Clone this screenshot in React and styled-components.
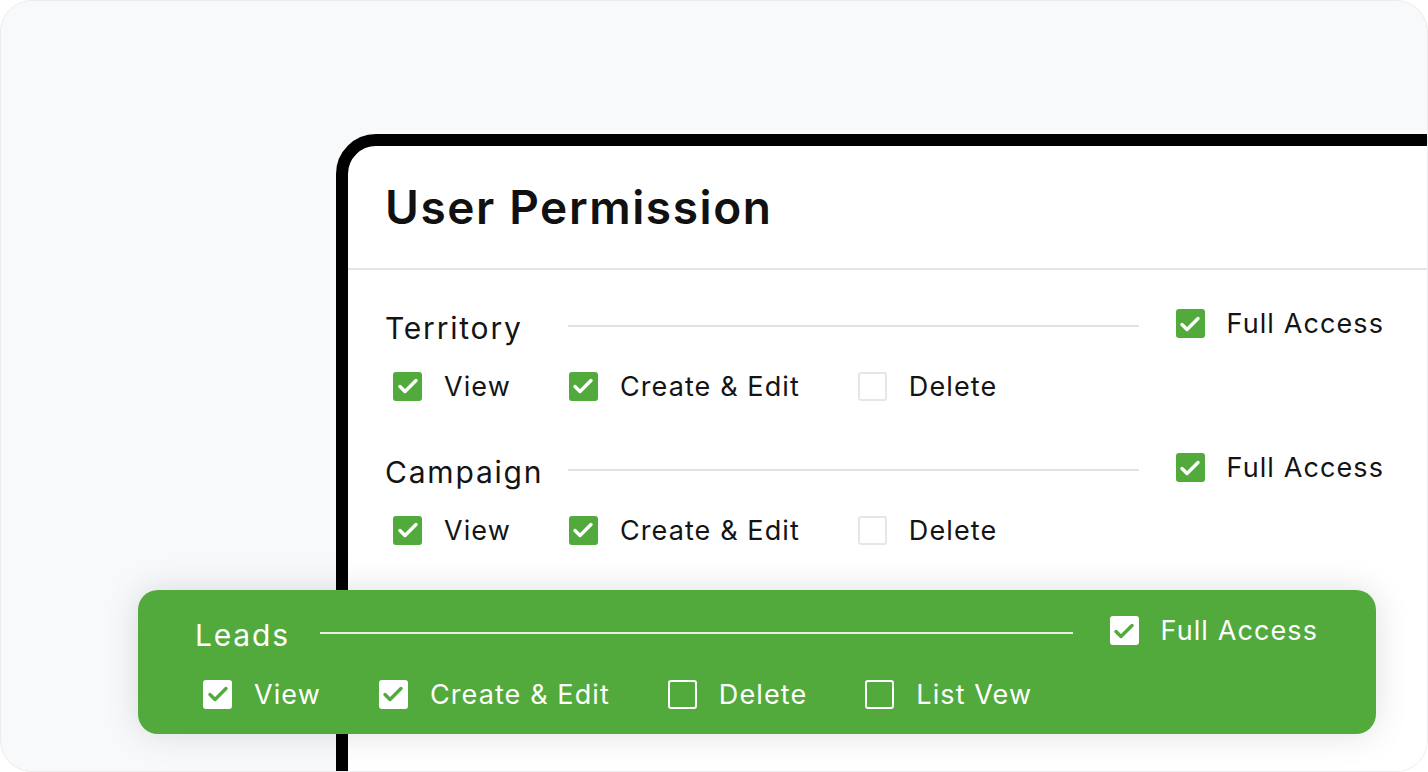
import React from "react";
import styled, { createGlobalStyle } from "styled-components";

const GREEN = "#52aa3d";

const GlobalStyle = createGlobalStyle`
  html, body {
    margin: 0;
    padding: 0;
    background: #ffffff;
  }
  body {
    font-family: Inter, "Noto Sans", sans-serif;
    color: #141414;
  }
  * {
    box-sizing: border-box;
  }
`;

const Canvas = styled.div`
  position: relative;
  width: 1428px;
  height: 772px;
  border: 1px solid #ececee;
  border-radius: 32px;
  background: #f8f9fa;
  overflow: hidden;
  padding: 133px 0 0 335px;
`;

const Frame = styled.div`
  width: 1200px;
  height: 700px;
  border: 12px solid #000;
  border-radius: 40px 40px 0 0;
  background: #fff;
`;

const Header = styled.div`
  height: 124px;
  display: flex;
  align-items: center;
  padding-left: 37px;
  border-bottom: 2px solid #e4e4e4;
`;

const Title = styled.h1`
  margin: 0;
  font-size: 46px;
  font-weight: 600;
  letter-spacing: 1.6px;
  color: #111;
`;

const Body = styled.div`
  padding: 37px 0 0 37px;
  display: flex;
  flex-direction: column;
  gap: 50px;
`;

const Section = styled.div`
  width: ${(p) => p.$width}px;
  display: flex;
  flex-direction: column;
  gap: ${(p) => p.$gap}px;
`;

const LabelRow = styled.div`
  height: 40px;
  display: grid;
  grid-template-columns: ${(p) => p.$labelWidth}px 1fr auto;
  align-items: center;
`;

const Label = styled.span`
  font-size: 30px;
  font-weight: 400;
  letter-spacing: 1.8px;
  color: ${(p) => (p.$inverse ? "#fff" : "#141414")};
`;

const Rule = styled.div`
  height: 2px;
  margin: 0 ${(p) => p.$gap}px 4px 0;
  background: ${(p) => (p.$inverse ? "#e6efe2" : "#e2e2e2")};
`;

const Options = styled.div`
  height: 30px;
  display: flex;
  align-items: center;
  gap: 58px;
  padding-left: 8px;
`;

const Option = styled.label`
  display: flex;
  align-items: center;
  gap: 22px;
  font-size: 27px;
  letter-spacing: 1.1px;
  color: ${(p) => (p.$inverse ? "#fff" : "#141414")};
  margin-bottom: ${(p) => (p.$raised ? "8px" : "0")};
`;

const Box = styled.span`
  width: 29px;
  height: 29px;
  flex: none;
  border-radius: 3px;
  display: flex;
  align-items: center;
  justify-content: center;
  background: ${(p) =>
    p.$checked ? (p.$inverse ? "#fff" : GREEN) : "transparent"};
  border: ${(p) =>
    p.$checked ? "none" : p.$inverse ? "2px solid #fff" : "2px solid #e6e6e6"};
`;

const LeadsCard = styled.div`
  position: absolute;
  left: 137px;
  top: 589px;
  width: 1238px;
  height: 144px;
  border-radius: 20px;
  background: ${GREEN};
  box-shadow: 0 0 34px rgba(0, 0, 0, 0.13);
  padding: 24px 0 0 57px;
`;

function Check({ checked, inverse }) {
  return (
    <Box $checked={checked} $inverse={inverse}>
      {checked && (
        <svg width="22" height="22" viewBox="0 0 22 22" fill="none">
          <path
            d="M3 11.5 L8 16.5 L19 5.5"
            stroke={inverse ? GREEN : "#fff"}
            strokeWidth="3.4"
            strokeLinecap="round"
            strokeLinejoin="round"
          />
        </svg>
      )}
    </Box>
  );
}

function PermissionGroup({
  name,
  options,
  inverse,
  width,
  labelWidth,
  ruleGap,
  rowGap = 24,
}) {
  return (
    <Section $width={width} $gap={rowGap}>
      <LabelRow $labelWidth={labelWidth}>
        <Label $inverse={inverse}>{name}</Label>
        <Rule $inverse={inverse} $gap={ruleGap} />
        <Option $inverse={inverse} $raised>
          <Check checked inverse={inverse} />
          Full Access
        </Option>
      </LabelRow>
      <Options>
        {options.map((o) => (
          <Option key={o.label} $inverse={inverse}>
            <Check checked={o.checked} inverse={inverse} />
            {o.label}
          </Option>
        ))}
      </Options>
    </Section>
  );
}

const baseOptions = [
  { label: "View", checked: true },
  { label: "Create & Edit", checked: true },
  { label: "Delete", checked: false },
];

const leadOptions = [...baseOptions, { label: "List Vew", checked: false }];

export default function App() {
  return (
    <>
      <GlobalStyle />
      <Canvas>
        <Frame>
          <Header>
            <Title>User Permission</Title>
          </Header>
          <Body>
            <PermissionGroup
              name="Territory"
              options={baseOptions}
              width={999}
              labelWidth={183}
              ruleGap={37}
            />
            <PermissionGroup
              name="Campaign"
              options={baseOptions}
              width={999}
              labelWidth={183}
              ruleGap={37}
            />
          </Body>
        </Frame>
        <LeadsCard>
          <PermissionGroup
            name="Leads"
            options={leadOptions}
            inverse
            width={1123}
            labelWidth={125}
            ruleGap={37}
            rowGap={25}
          />
        </LeadsCard>
      </Canvas>
    </>
  );
}
